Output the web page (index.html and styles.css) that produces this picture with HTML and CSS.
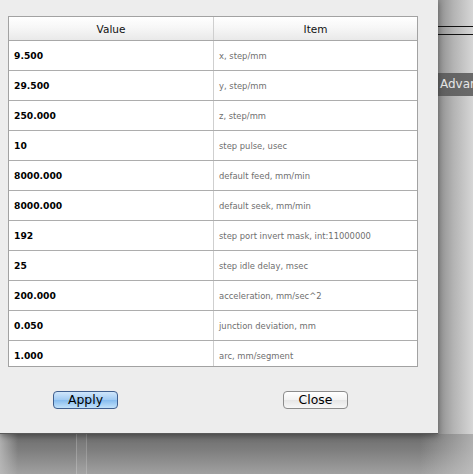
FILE: index.html
```html
<!DOCTYPE html>
<html>
<head>
<meta charset="utf-8">
<link rel="stylesheet" href="styles.css">
</head>
<body>
<div class="desk">
  <div class="dialog">
    <div class="table">
      <div class="head">
        <div class="hcell c1">Value</div>
        <div class="hcell c2">Item</div>
      </div>
      <div class="body">
        <div class="row"><div class="cell c1 val">9.500</div><div class="cell c2 item">x, step/mm</div></div>
        <div class="row"><div class="cell c1 val">29.500</div><div class="cell c2 item">y, step/mm</div></div>
        <div class="row"><div class="cell c1 val">250.000</div><div class="cell c2 item">z, step/mm</div></div>
        <div class="row"><div class="cell c1 val">10</div><div class="cell c2 item">step pulse, usec</div></div>
        <div class="row"><div class="cell c1 val">8000.000</div><div class="cell c2 item">default feed, mm/min</div></div>
        <div class="row"><div class="cell c1 val">8000.000</div><div class="cell c2 item">default seek, mm/min</div></div>
        <div class="row"><div class="cell c1 val">192</div><div class="cell c2 item">step port invert mask, int:11000000</div></div>
        <div class="row"><div class="cell c1 val">25</div><div class="cell c2 item">step idle delay, msec</div></div>
        <div class="row"><div class="cell c1 val">200.000</div><div class="cell c2 item">acceleration, mm/sec^2</div></div>
        <div class="row"><div class="cell c1 val">0.050</div><div class="cell c2 item">junction deviation, mm</div></div>
        <div class="row"><div class="cell c1 val">1.000</div><div class="cell c2 item">arc, mm/segment</div></div>
      </div>
    </div>
    <div class="buttons">
      <button class="btn apply">Apply</button>
      <button class="btn close">Close</button>
    </div>
  </div>
  <div class="side">
    <div class="rule r1"></div>
    <div class="rule r2"></div>
    <div class="adv">Advanced</div>
  </div>
  <div class="bottom">
    <div class="bar"></div>
  </div>
</div>
</body>
</html>
```
FILE: styles.css
```css
* { box-sizing: border-box; }
html, body { margin: 0; padding: 0; }
body {
  width: 473px;
  height: 474px;
  overflow: hidden;
  background: #9a9a9a;
  font-family: "DejaVu Sans", sans-serif;
}
.desk {
  display: grid;
  grid-template-columns: 438px 35px;
  grid-template-rows: 434px 40px;
  width: 473px;
  height: 474px;
}
.dialog {
  position: relative;
  z-index: 1;
  grid-column: 1;
  grid-row: 1;
  background: #ededed;
  padding: 16px 0 0 8px;
  border-bottom: 1px solid #5a5a5a;
  box-shadow: 0 2px 6px rgba(0,0,0,0.35);
}
.table {
  width: 410px;
  border: 1px solid #a2a2a2;
  background: #fff;
}
.head {
  display: flex;
  height: 24px;
  border-bottom: 1px solid #a8a8a8;
  background: linear-gradient(#ffffff, #f7f7f7 45%, #e9e9e9);
}
.hcell {
  display: flex;
  align-items: center;
  justify-content: center;
  font-size: 10.5px;
  color: #111;
  padding-top: 1px;
}
.c1 { width: 205px; border-right: 1px solid #cfcfcf; flex: none; }
.c2 { flex: 1; }
.body {
  height: 325px;
  overflow: hidden;
}
.row {
  display: flex;
  height: 30px;
  border-bottom: 1px solid #adadad;
}
.cell {
  display: flex;
  align-items: center;
}
.val {
  font-weight: bold;
  font-size: 9.2px;
  color: #000;
  padding-left: 5px;
}
.item {
  font-size: 8.4px;
  color: #6e6e6e;
  padding-left: 5px;
}
.buttons {
  display: flex;
  padding: 24px 0 0 45px;
  gap: 165px;
}
.btn {
  width: 65px;
  height: 18px;
  border-radius: 4px;
  font-family: "DejaVu Sans", sans-serif;
  font-size: 12.4px;
  color: #000;
  padding: 0;
  line-height: 16px;
}
.apply {
  border: 1px solid #3f5f8f;
  background: linear-gradient(#d0e6fb, #a0caf3 50%, #86bcef 51%, #c2e2fb);
}
.close {
  border: 1px solid #8c8c8c;
  background: linear-gradient(#ffffff, #f2f2f2 50%, #e6e6e6 51%, #f7f7f7);
}
.side {
  grid-column: 2;
  grid-row: 1;
  background: linear-gradient(90deg, #8e8e8e, #b4b4b4 45%, #d6d6d6);
  display: flex;
  flex-direction: column;
  overflow: hidden;
}
.rule { height: 1px; background: #111; }
.r1 { margin-top: 26px; }
.r2 { margin-top: 7px; }
.adv {
  margin-top: 38px;
  margin-left: -4px;
  height: 23px;
  width: 80px;
  background: linear-gradient(90deg, #5e5e5e, #767676);
  color: #e6e6e6;
  font-size: 12px;
  padding-left: 6px;
  line-height: 23px;
  white-space: nowrap;
}
.bottom {
  grid-column: 1 / span 2;
  grid-row: 2;
  background:
    linear-gradient(90deg, rgba(190,190,190,0.8), rgba(190,190,190,0) 18px, rgba(190,190,190,0) 420px, rgba(200,200,200,0.7) 473px),
    linear-gradient(#6c6c6c, #7e7e7e 40%, #a0a0a0);
  padding-left: 76px;
}
.bar {
  width: 11px;
  height: 100%;
  border-left: 1px solid rgba(255,255,255,0.2);
  border-right: 1px solid rgba(255,255,255,0.16);
  background: rgba(255,255,255,0.04);
}
```
